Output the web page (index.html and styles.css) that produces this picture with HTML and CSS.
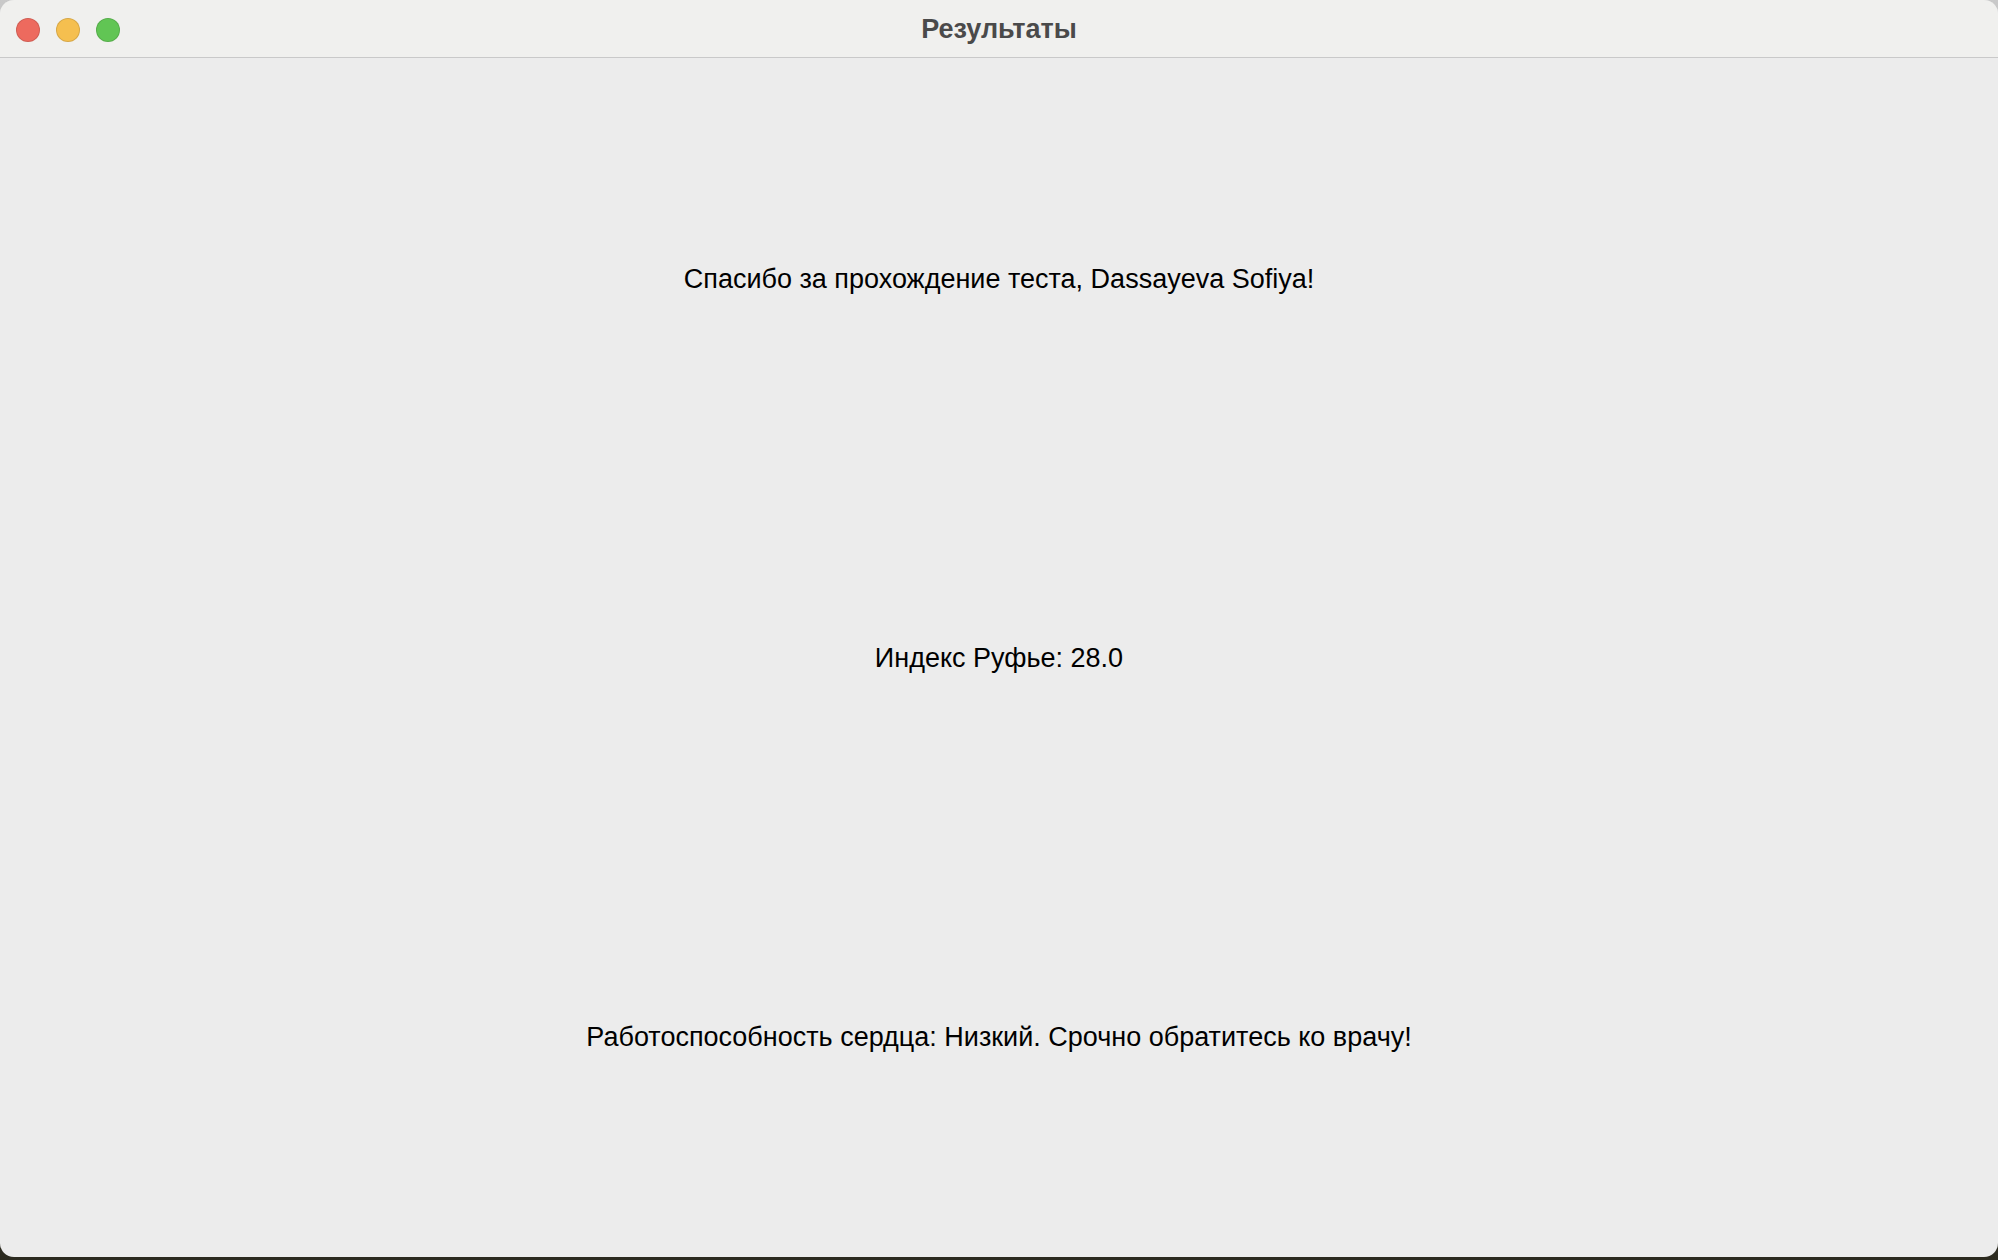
FILE: index.html
```html
<!DOCTYPE html>
<html lang="ru">
<head>
<meta charset="utf-8">
<title>Результаты</title>
<link rel="stylesheet" href="styles.css">
</head>
<body>
<div class="window">
  <div class="titlebar">
    <div class="lights">
      <span class="light red"></span>
      <span class="light yellow"></span>
      <span class="light green"></span>
    </div>
    <div class="title">Результаты</div>
  </div>
  <div class="content">
    <p class="line">Спасибо за прохождение теста, Dassayeva Sofiya!</p>
    <p class="line">Индекс Руфье: 28.0</p>
    <p class="line">Работоспособность сердца: Низкий. Срочно обратитесь ко врачу!</p>
  </div>
</div>
</body>
</html>
```

FILE: styles.css
```css
html, body {
  margin: 0;
  padding: 0;
  width: 1998px;
  height: 1260px;
  overflow: hidden;
}
body {
  background: linear-gradient(#c9c9c9 0, #9a9a9a 40%, #2b2a1f 100%);
  font-family: "Liberation Sans", Arial, sans-serif;
}
.window {
  width: 1998px;
  height: 1257px;
  border-radius: 14px;
  overflow: hidden;
  background: #ececec;
  display: flex;
  flex-direction: column;
  box-shadow: inset 0 1px 0 #c4c4c4;
}
.titlebar {
  position: relative;
  height: 57px;
  flex: none;
  background: #f0f0ee;
  border-bottom: 1px solid #c9c9c9;
  display: flex;
  align-items: center;
  justify-content: center;
}
.lights {
  position: absolute;
  left: 16px;
  top: 18px;
  display: flex;
  gap: 16px;
}
.light {
  width: 22px;
  height: 22px;
  border-radius: 50%;
  border: 1px solid rgba(0,0,0,0.12);
}
.red { background: #ed6a5e; }
.yellow { background: #f5bf4f; }
.green { background: #61c554; }
.title {
  font-weight: bold;
  font-size: 27px;
  color: #4a4a4a;
  margin-top: 1px;
}
.content {
  flex: 1;
  display: flex;
  flex-direction: column;
  align-items: center;
  padding-top: 206px;
  gap: 349px;
}
.line {
  margin: 0;
  font-size: 27px;
  line-height: 30px;
  color: #000;
}
```
